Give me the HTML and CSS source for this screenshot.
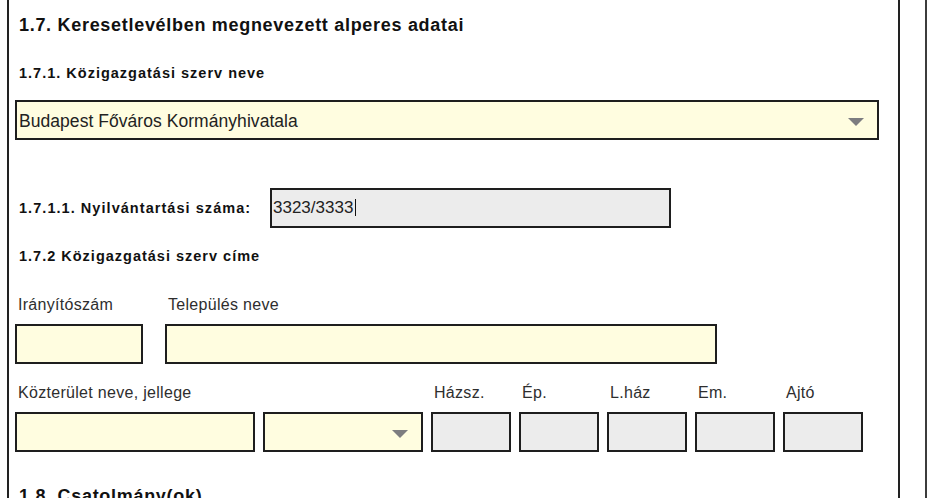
FILE: index.html
```html
<!DOCTYPE html>
<html lang="hu">
<head>
<meta charset="utf-8">
<title>1.7. Keresetlevélben megnevezett alperes adatai</title>
<link rel="stylesheet" href="styles.css">
</head>
<body>
<div class="outer">
  <div class="panel">
    <h1 class="section-title">1.7. Keresetlevélben megnevezett alperes adatai</h1>

    <h2 class="sub-title first">1.7.1. Közigazgatási szerv neve</h2>
    <div class="box yellow select-main">
      <span class="box-text">Budapest Főváros Kormányhivatala</span>
      <svg class="arrow" width="16" height="8" viewBox="0 0 16 8"><polygon points="0,0 16,0 8,8" fill="#7d7d80"/></svg>
    </div>

    <div class="reg-row">
      <span class="reg-label">1.7.1.1. Nyilvántartási száma:</span>
      <div class="box grey reg-input"><span class="reg-text">3323/3333</span><span class="caret"></span></div>
    </div>

    <h2 class="sub-title address">1.7.2 Közigazgatási szerv címe</h2>

    <div class="field-row row-one">
      <div class="field w-zip">
        <div class="field-label">Irányítószám</div>
        <div class="box yellow"></div>
      </div>
      <div class="field w-city">
        <div class="field-label">Település neve</div>
        <div class="box yellow"></div>
      </div>
    </div>

    <div class="field-row row-two">
      <div class="field w-street">
        <div class="field-label">Közterület neve, jellege</div>
        <div class="box yellow"></div>
      </div>
      <div class="field w-type">
        <div class="field-label">&nbsp;</div>
        <div class="box yellow select-small">
          <svg class="arrow" width="16" height="8" viewBox="0 0 16 8"><polygon points="0,0 16,0 8,8" fill="#7d7d80"/></svg>
        </div>
      </div>
      <div class="field w-small">
        <div class="field-label">Házsz.</div>
        <div class="box grey"></div>
      </div>
      <div class="field w-small">
        <div class="field-label">Ép.</div>
        <div class="box grey"></div>
      </div>
      <div class="field w-small">
        <div class="field-label">L.ház</div>
        <div class="box grey"></div>
      </div>
      <div class="field w-small">
        <div class="field-label">Em.</div>
        <div class="box grey"></div>
      </div>
      <div class="field w-small">
        <div class="field-label">Ajtó</div>
        <div class="box grey"></div>
      </div>
    </div>

    <h1 class="section-title next">1.8. Csatolmány(ok)</h1>
  </div>
</div>
</body>
</html>
```

FILE: styles.css
```css
html, body {
  margin: 0;
  padding: 0;
  background: #ffffff;
  overflow: hidden;
  height: 498px;
}

body {
  font-family: "Liberation Sans", Arial, sans-serif;
  color: #1a1a1a;
}

.outer {
  width: 925px;
  height: 498px;
  border-right: 2px solid #3c3c3c;
}

.panel {
  margin-left: 7px;
  width: 883px;
  height: 498px;
  border-left: 2px solid #222;
  border-right: 2px solid #222;
  padding: 13px 0 0 6px;
  box-sizing: content-box;
}

.section-title {
  margin: 0;
  padding-left: 4px;
  font-size: 18px;
  font-weight: bold;
  line-height: 24px;
  letter-spacing: 0.7px;
  color: #111;
}

.section-title.next {
  margin-top: 32px;
}

.sub-title {
  margin: 0;
  padding-left: 4px;
  font-size: 14.5px;
  font-weight: bold;
  line-height: 20px;
  letter-spacing: 1px;
  color: #111;
}

.sub-title.first {
  margin-top: 26px;
}

.sub-title.address {
  margin-top: 18px;
}

.box {
  height: 40px;
  box-sizing: border-box;
  border: 2px solid #1e1e1e;
}

.yellow {
  background: #fffde0;
}

.grey {
  background: #ececec;
}

.select-main {
  margin-top: 17px;
  width: 864px;
  display: flex;
  align-items: center;
  justify-content: space-between;
  padding: 0 13px 0 2px;
}

.box-text {
  font-size: 17.5px;
  line-height: 20px;
  letter-spacing: 0.05px;
  color: #222;
  margin-top: 1px;
}

.arrow {
  display: block;
  margin-top: 3px;
}

.select-small {
  display: flex;
  align-items: center;
  justify-content: flex-end;
  padding-right: 13px;
}

.reg-row {
  margin-top: 48px;
  display: flex;
  align-items: flex-start;
}

.reg-label {
  width: 255px;
  box-sizing: border-box;
  padding-left: 4px;
  margin-top: 10px;
  font-size: 14.5px;
  font-weight: bold;
  line-height: 20px;
  letter-spacing: 1.05px;
  color: #111;
}

.reg-input {
  width: 401px;
  padding: 0 0 0 1px;
  font-size: 17px;
  line-height: 36px;
  color: #222;
}

.caret {
  display: inline-block;
  width: 1px;
  height: 17px;
  margin-left: 2px;
  background: #111;
  vertical-align: -3px;
}

.field-row {
  display: flex;
}

.row-one {
  margin-top: 29px;
  gap: 22px;
}

.row-two {
  margin-top: 19px;
  gap: 8px;
}

.field-label {
  padding-left: 3px;
  font-size: 16px;
  line-height: 20px;
  letter-spacing: 0.3px;
  color: #2e2e2e;
  margin-bottom: 9px;
  white-space: nowrap;
}

.w-zip { width: 128px; }
.w-city { width: 552px; }
.w-street { width: 240px; }
.w-type { width: 160px; }
.w-small { width: 80px; }
```
